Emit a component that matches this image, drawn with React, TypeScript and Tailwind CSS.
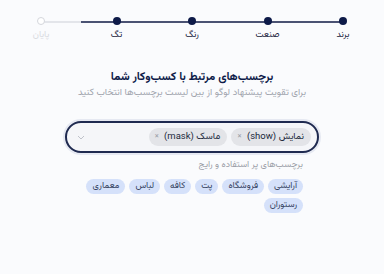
import React from "react";

const steps = [
  { label: "برند", done: true },
  { label: "صنعت", done: true },
  { label: "رنگ", done: true },
  { label: "تگ", done: true },
  { label: "پایان", done: false },
];

const tags = ["آرایشی", "فروشگاه", "پت", "کافه", "لباس", "معماری", "رستوران"];

export default function App() {
  return (
    <div
      dir="rtl"
      className="w-[384px] h-[274px] bg-[#fafbfd] overflow-hidden"
      style={{ fontFamily: '"Vazirmatn", "DejaVu Sans", sans-serif' }}
    >
      {/* stepper */}
      <div className="px-[28px] pt-[17px]">
        <div className="relative flex justify-between">
          <div className="absolute top-[4px] left-[13px] right-[13px] h-[1.5px] bg-[#e3e5ea]" />
          <div className="absolute top-[4px] left-[53px] right-[13px] h-[1.5px] bg-[#4a5273]" />
          {steps.map((s) => (
            <div key={s.label} className="relative w-[26px] flex flex-col items-center">
              <div
                className={
                  s.done
                    ? "w-[8px] h-[8px] rounded-full bg-[#0d1a48]"
                    : "w-[8px] h-[8px] rounded-full bg-white border border-[#d4d6dc]"
                }
              />
              <div
                className={
                  s.done
                    ? "mt-[4px] text-[9px] leading-[12px] text-[#1b2440] whitespace-nowrap"
                    : "mt-[4px] text-[9px] leading-[12px] text-[#d8dadf] whitespace-nowrap"
                }
              >
                {s.label}
              </div>
            </div>
          ))}
        </div>
      </div>

      {/* title */}
      <div className="mt-[28px] flex flex-col items-center">
        <div className="text-[11.5px] leading-[16px] font-bold text-[#0d1a48]">
          برچسب‌های مرتبط با کسب‌وکار شما
        </div>
        <div className="mt-[1px] text-[9.5px] leading-[14px] text-[#a0a4ad]">
          برای تقویت پیشنهاد لوگو از بین لیست برچسب‌ها انتخاب کنید
        </div>
      </div>

      {/* input */}
      <div className="mt-[21px] flex justify-center">
        <div className="w-[254px] h-[32px] rounded-full border-2 border-[#1f2a50] bg-[#f5f6f9] shadow-[0_0_0_2px_#e6e9f2] flex items-center pr-[6px] pl-[10px] gap-[4px]">
          <div className="h-[18px] rounded-full bg-[#e3e4e8] flex items-center gap-[5px] pr-[7px] pl-[6px] text-[9.5px] text-[#222a3c] whitespace-nowrap">
            <span>نمایش (show)</span>
            <span className="text-[#9a9ea7] text-[9px]">×</span>
          </div>
          <div className="h-[18px] rounded-full bg-[#e3e4e8] flex items-center gap-[5px] pr-[7px] pl-[6px] text-[9.5px] text-[#222a3c] whitespace-nowrap">
            <span>ماسک (mask)</span>
            <span className="text-[#9a9ea7] text-[9px]">×</span>
          </div>
          <div className="flex-1" />
          <svg width="8" height="5" viewBox="0 0 8 5" className="mt-[1px]">
            <path d="M1 1 L4 4 L7 1" fill="none" stroke="#b9bcc4" strokeWidth="0.9" />
          </svg>
        </div>
      </div>

      {/* popular tags */}
      <div className="mr-[81px] ml-[80px] mt-[5px]">
        <div className="text-[9px] leading-[14px] text-[#9a9ea7]">برچسب‌های پر استفاده و رایج</div>
        <div className="mt-[7px] flex flex-wrap gap-x-[4px] gap-y-[4px]">
          {tags.map((t) => (
            <div
              key={t}
              className="h-[15px] px-[6px] rounded-full bg-[#d5e1fa] text-[#34425f] text-[9px] leading-[15px] whitespace-nowrap"
            >
              {t}
            </div>
          ))}
        </div>
      </div>
    </div>
  );
}
